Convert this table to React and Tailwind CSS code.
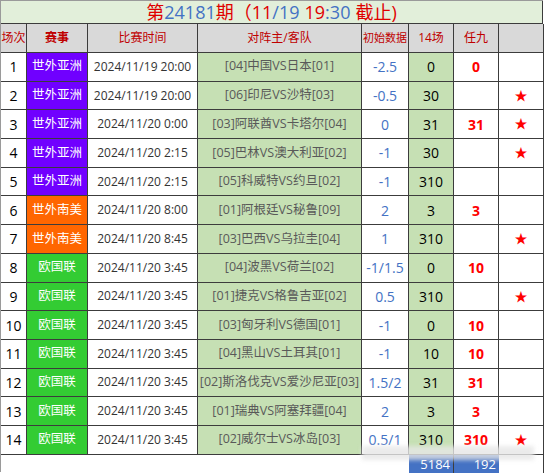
import React from 'react'

const font = { fontFamily: '"Open Sans", "Noto Sans CJK SC", sans-serif' }

const rows = [
  [1, 'asia', '世外亚洲', '2024/11/19 20:00', '[04]中国VS日本[01]', '-2.5', '0', '0', false],
  [2, 'asia', '世外亚洲', '2024/11/19 20:00', '[06]印尼VS沙特[03]', '-0.5', '30', '', true],
  [3, 'asia', '世外亚洲', '2024/11/20 0:00', '[03]阿联酋VS卡塔尔[04]', '0', '31', '31', true],
  [4, 'asia', '世外亚洲', '2024/11/20 2:15', '[05]巴林VS澳大利亚[02]', '-1', '30', '', true],
  [5, 'asia', '世外亚洲', '2024/11/20 2:15', '[05]科威特VS约旦[02]', '-1', '310', '', false],
  [6, 'sa', '世外南美', '2024/11/20 8:00', '[01]阿根廷VS秘鲁[09]', '2', '3', '3', false],
  [7, 'sa', '世外南美', '2024/11/20 8:45', '[03]巴西VS乌拉圭[04]', '1', '310', '', true],
  [8, 'eu', '欧国联', '2024/11/20 3:45', '[04]波黑VS荷兰[02]', '-1/1.5', '0', '10', false],
  [9, 'eu', '欧国联', '2024/11/20 3:45', '[01]捷克VS格鲁吉亚[02]', '0.5', '310', '', true],
  [10, 'eu', '欧国联', '2024/11/20 3:45', '[03]匈牙利VS德国[01]', '-1', '0', '10', false],
  [11, 'eu', '欧国联', '2024/11/20 3:45', '[04]黑山VS土耳其[01]', '-1', '10', '10', false],
  [12, 'eu', '欧国联', '2024/11/20 3:45', '[02]斯洛伐克VS爱沙尼亚[03]', '1.5/2', '31', '31', false],
  [13, 'eu', '欧国联', '2024/11/20 3:45', '[01]瑞典VS阿塞拜疆[04]', '2', '3', '3', false],
  [14, 'eu', '欧国联', '2024/11/20 3:45', '[02]威尔士VS冰岛[03]', '0.5/1', '310', '310', true],
]

const leagueBg = {
  asia: 'bg-[#7000ff]',
  sa: 'bg-[#ff6600]',
  eu: 'bg-[#33cc33]',
}

const cols = 'grid grid-cols-[26px_61px_110px_164px_47px_45px_45px_45px]'
const cell = 'flex items-center justify-center whitespace-nowrap overflow-hidden border-r border-b border-[#3c3c3c]'

export default function App() {
  return (
    <div className="w-[546px] h-[473px] bg-white relative overflow-hidden" style={font}>
      <div className="w-[543px] border-l border-t border-[#9a9a9a]">
        <div className="h-[23px] bg-[#e2efda] flex items-center justify-center border-r border-b border-[#3c3c3c] text-[18px] text-[#e00000] leading-none">
          <span>第</span>
          <span className="text-[#4472c4]">24181</span>
          <span>期（11</span>
          <span className="text-[#4472c4]">/19</span>
          <span className="ml-[5px]">19</span>
          <span className="text-[#4472c4]">:30</span>
          <span className="ml-[5px]">截止)</span>
        </div>

        <div className={`${cols} h-[29px] bg-[#d9d9d9] text-[12px] text-[#c00000]`}>
          <div className={cell}>场次</div>
          <div className={`${cell} font-semibold`}>赛事</div>
          <div className={cell}>比赛时间</div>
          <div className={cell}>对阵主/客队</div>
          <div className={`${cell} text-[11px]`}>初始数据</div>
          <div className={cell}>14场</div>
          <div className={cell}>任九</div>
          <div className={cell}></div>
        </div>

        {rows.map((r) => (
          <div key={r[0]} className={`${cols} h-[28.7px]`}>
            <div className={`${cell} text-[14px] text-black`}>{r[0]}</div>
            <div className={`${cell} ${leagueBg[r[1]]} text-[12.5px] text-white`}>{r[2]}</div>
            <div className={`${cell} text-[12px] text-[#333]`}>{r[3]}</div>
            <div className={`${cell} bg-[#c6e0b4] text-[12.5px] text-[#595959]`}>{r[4]}</div>
            <div className={`${cell} text-[14px] text-[#4472c4]`}>{r[5]}</div>
            <div className={`${cell} bg-[#c6e0b4] text-[14px] text-black`}>{r[6]}</div>
            <div className={`${cell} text-[14px] font-bold text-[#ff0000]`}>{r[7]}</div>
            <div className={`${cell} text-[13px] text-[#ff0000]`}>{r[8] ? '★' : ''}</div>
          </div>
        ))}

        <div className={`${cols} h-[17px] text-[13px]`}>
          <div className="border-b border-[#3c3c3c] col-span-5"></div>
          <div className="bg-[#4472c4] text-white flex items-center justify-end pr-[3px] border-r border-b border-[#3c3c3c]">5184</div>
          <div className="bg-[#4472c4] text-white flex items-center justify-end pr-[3px] border-b border-[#3c3c3c]">192</div>
          <div className="border-r border-b border-[#3c3c3c]"></div>
        </div>
      </div>

      <div className="absolute left-[362px] top-[446px] w-[172px] h-[14px] bg-[#e6e6e6]/80 blur-[2px]"></div>
    </div>
  )
}
